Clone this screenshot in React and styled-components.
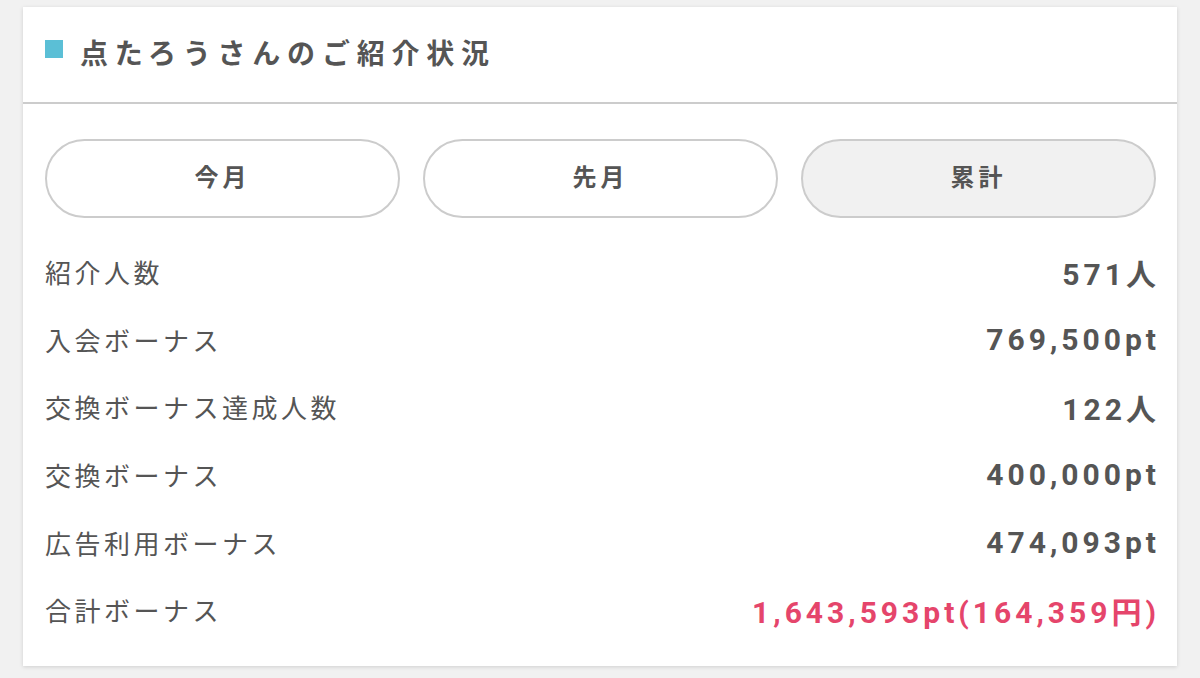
import React from "react";
import styled, { createGlobalStyle } from "styled-components";

const GlobalStyle = createGlobalStyle`
  html, body {
    margin: 0;
    padding: 0;
    background-color: #f1f1f1;
  }
  body {
    font-family: Roboto, "Noto Sans CJK JP", sans-serif;
    color: #555555;
  }
`;

const Page = styled.div`
  padding: 7px 23px 12px 23px;
`;

const Card = styled.section`
  background-color: #ffffff;
  box-shadow: 0 1px 4px rgba(0, 0, 0, 0.14);
`;

const Header = styled.div`
  display: flex;
  align-items: center;
  height: 95px;
  padding: 0 22px;
  border-bottom: 2px solid #cccccc;
`;

const Square = styled.span`
  display: block;
  width: 18px;
  height: 18px;
  background-color: #5bbfd6;
  margin: -12px 17px 0 0;
`;

const Title = styled.h2`
  margin: -6px 0 0 0;
  font-family: "Noto Sans CJK JP", sans-serif;
  font-size: 28px;
  line-height: 1;
  font-weight: 700;
  letter-spacing: 6.8px;
  color: #555555;
`;

const Body = styled.div`
  padding: 35px 21px 22px 22px;
`;

const Tabs = styled.div`
  display: grid;
  grid-template-columns: repeat(3, 1fr);
  gap: 23px;
  margin-bottom: 20px;
`;

const Tab = styled.button`
  height: 79px;
  padding: 0 0 6px 0;
  border: 2px solid #cccccc;
  border-radius: 40px;
  background-color: ${(p) => (p.$active ? "#f1f1f1" : "#ffffff")};
  font-family: "Noto Sans CJK JP", sans-serif;
  font-size: 24px;
  font-weight: 700;
  letter-spacing: 4px;
  color: #555555;
  cursor: pointer;
`;

const Row = styled.div`
  display: flex;
  align-items: center;
  justify-content: space-between;
  height: 67.6px;
`;

const Label = styled.span`
  font-family: "Noto Sans CJK JP", sans-serif;
  font-size: 26px;
  letter-spacing: 3.5px;
  color: #555555;
`;

const Value = styled.span`
  font-family: Roboto, "Noto Sans CJK JP", sans-serif;
  font-size: 30px;
  font-weight: 700;
  letter-spacing: 4px;
  margin: 0 -4px 0 0;
  color: ${(p) => (p.$total ? "#e5456b" : "#555555")};
`;

const rows = [
  { label: "紹介人数", value: "571人" },
  { label: "入会ボーナス", value: "769,500pt" },
  { label: "交換ボーナス達成人数", value: "122人" },
  { label: "交換ボーナス", value: "400,000pt" },
  { label: "広告利用ボーナス", value: "474,093pt" },
  { label: "合計ボーナス", value: "1,643,593pt(164,359円)", total: true },
];

const tabs = ["今月", "先月", "累計"];

export default function App() {
  return (
    <>
      <GlobalStyle />
      <Page>
        <Card>
          <Header>
            <Square />
            <Title>点たろうさんのご紹介状況</Title>
          </Header>
          <Body>
            <Tabs>
              {tabs.map((t, i) => (
                <Tab key={t} $active={i === 2}>
                  {t}
                </Tab>
              ))}
            </Tabs>
            {rows.map((r) => (
              <Row key={r.label}>
                <Label>{r.label}</Label>
                <Value $total={r.total}>{r.value}</Value>
              </Row>
            ))}
          </Body>
        </Card>
      </Page>
    </>
  );
}
